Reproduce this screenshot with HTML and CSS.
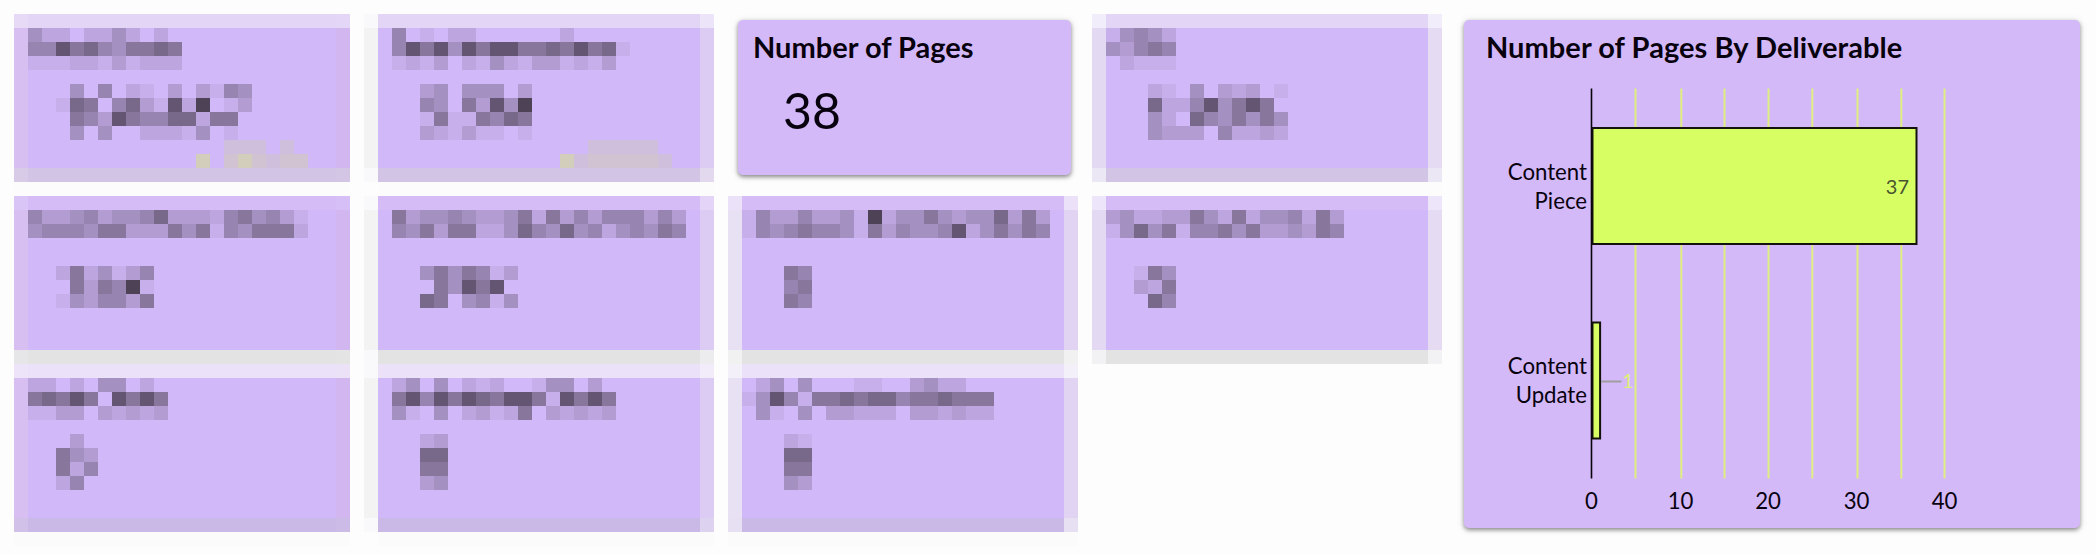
FILE: index.html
```html
<!DOCTYPE html>
<html lang="en">
<head>
<meta charset="utf-8">
<title>Pages dashboard</title>
<link rel="stylesheet" href="styles.css">
</head>
<body>
<main class="dashboard">
  <section class="metrics">
    <div class="tile" data-tile="a1"></div>
    <div class="tile" data-tile="b1"></div>
    <article class="card metric">
      <h2 class="card-title">Number of Pages</h2>
      <p class="metric-value">38</p>
    </article>
    <div class="tile" data-tile="d1"></div>
    <div class="tile" data-tile="a2"></div>
    <div class="tile" data-tile="b2"></div>
    <div class="tile" data-tile="c2"></div>
    <div class="tile" data-tile="d2"></div>
    <div class="tile" data-tile="a3"></div>
    <div class="tile" data-tile="b3"></div>
    <div class="tile" data-tile="c3"></div>
  </section>
  <article class="card chart-card">
    <h2 class="card-title">Number of Pages By Deliverable</h2>
    <svg class="chart" width="616" height="450" viewBox="1464 78 616 450">
      <g class="grid-lines">
        <path d="M1635.5 88.5V478.5M1681.3 88.5V478.5M1724.5 88.5V478.5M1768.5 88.5V478.5M1812.3 88.5V478.5M1857.5 88.5V478.5M1901.3 88.5V478.5M1944.5 88.5V478.5"/>
      </g>
      <rect class="bar" x="1592.5" y="128" width="324" height="116"/>
      <rect class="bar" x="1592.5" y="322.5" width="7.6" height="116"/>
      <path class="axis" d="M1591.5 88.5V478.5"/>
      <path class="leader" d="M1601 381.5H1621.5"/>
      <g class="category">
        <text x="1587" y="179.5">Content</text>
        <text x="1587" y="208.5">Piece</text>
        <text x="1587" y="373.5">Content</text>
        <text x="1587" y="402.5">Update</text>
      </g>
      <text class="value-in" x="1909" y="193.5">37</text>
      <text class="value-out" x="1622" y="388">1</text>
      <g class="ticks">
        <text x="1591.5" y="508.5">0</text>
        <text x="1680.5" y="508.5">10</text>
        <text x="1768" y="508.5">20</text>
        <text x="1856.5" y="508.5">30</text>
        <text x="1944.5" y="508.5">40</text>
      </g>
    </svg>
  </article>
</main>
<script src="tiles.js"></script>
</body>
</html>
```
FILE: styles.css
```css
* { box-sizing: border-box; }
body {
  margin: 0;
  background: #fdfdfd;
  font-family: Lato, "Open Sans", sans-serif;
  color: #08020e;
}
.dashboard {
  display: flex;
  gap: 22px;
  width: 2096px;
  height: 554px;
  padding: 14px;
  overflow: hidden;
}
.metrics {
  display: grid;
  flex: none;
  grid-template-columns: 336px 350px 350px 350px;
  grid-template-rows: 182px 168px 168px;
  column-gap: 14px;
  width: 1428px;
}
.tile svg { display: block; }
.card {
  background: #d4b9f9;
  border-radius: 5px;
  box-shadow: 0 2px 4px rgba(0, 0, 0, .42), 0 1px 8px rgba(0, 0, 0, .1);
}
.card-title {
  margin: 0;
  font-size: 29px;
  line-height: 36px;
  font-weight: 700;
  white-space: nowrap;
}
.metric {
  width: 333px;
  height: 155px;
  margin: 6px 7px 0 10px;
  padding: 9px 15px;
}
.metric-value {
  margin: 15px 0 0 30px;
  font-size: 50px;
  line-height: 60px;
}
.chart-card {
  flex: none;
  width: 616px;
  height: 508px;
  margin-top: 6px;
}
.chart-card .card-title {
  padding: 9px 0 0 22px;
  height: 58px;
  letter-spacing: .05px;
}
.chart { display: block; }
.grid-lines path { stroke: #deee80; stroke-width: 2; fill: none; }
.bar { fill: #d7ff64; stroke: #14120f; stroke-width: 2; }
.axis { stroke: #08040c; stroke-width: 1.6; }
.leader { stroke: #9e9e9e; stroke-width: 2; }
.chart text { font-size: 22.2px; fill: #08020e; }
.category text { text-anchor: end; }
.ticks text { text-anchor: middle; }
.chart .value-in { text-anchor: end; font-size: 20px; fill: #4b5430; }
.chart .value-out { font-size: 20px; fill: #dff07a; }
```
FILE: tiles.js
```js
// Obscured metric tiles: each is a mosaic of 14px cells.
// Digits darken the tile colour, x/y/z are accent tints, dots stay plain.
const CELL = 14;
const LIGHT = [209, 184, 248];
const DARK = [78, 66, 86];
const TINTS = { x: '#d2c3d2', y: '#d3cdbb', z: '#d0bfdc' };
const LEVELS = [0, 0.08, 0.15, 0.24, 0.34, 0.44, 0.56, 0.68, 0.83, 1];

const bands = {
  1: { top: '#e3d5f6', bottom: '#d2c4e4', below: '#fbfcfb' },
  2: { top: '#d5bcf6', bottom: '#e3e3e4', below: null },
  3: { top: '#ebe1f8', bottom: '#cab8e6', below: '#fbfbfb' }
};
const edges = {
  a: { cols: 24, first: 0, left: '#d7c0f1', right: '#d2b6f0', veil: 0.15 },
  b: { cols: 25, first: 1, left: '#f3f3f3', right: '#dccbf3', veil: 0.4 },
  c: { cols: 25, first: 0, left: '#e8e0f3', right: '#e0d4f2', veil: 0.6 },
  d: { cols: 25, first: 0, left: '#e4d9f3', right: '#e5dcf4', veil: 0.65 }
};
const mosaics = {
  a1: ['422.2242.2', '55867546676', '11122131222', '', '...4.5.21.3.3154', '..176.5731829.13', '...653865577266', '...4.4..22214.1', '..............zzz.z', '............y.xyxzxx'],
  b1: ['5.1.22......2', '58684868866768671', '1213.21421331213', '', '..34.444.3', '..54.63849', '..16116576', '..321311.1', '..............zzzzz', '............yzxxxxxz'],
  d1: ['14542', '43565', '.2111', '', '...21.4.323.1', '...722584686', '...42.7546464', '...4333.52232'],
  a2: ['53345344573332564531', '45554663336461546662', '', '', '..2624135', '...636591', '..1435536'],
  b2: ['634454334626353555353', '546366224754745245465', '', '', '..4646513', '...64868', '..76.4514'],
  c2: ['1533533419244643447363', '1545655416354458246465', '', '', '...65', '...56', '...65'],
  d2: ['34223364262445263', '14746155646334365', '', '', '..164', '..326', '...75'],
  a3: ['22.2.44.2', '67686.8686', '1133.32323', '', '...3', '..643', '..625', '..25'],
  b3: ['24.4.212..144.3', '6858687688618686', '41.4.23126.32323', '', '..23', '..77', '..66', '..34'],
  c3: ['.24.4...11..3422', '148516676775667666', '.41.4.33222.332322', '', '...21', '...77', '...66', '...43']
};

function shade(mark) {
  if (TINTS[mark]) return TINTS[mark];
  const t = LEVELS[Number(mark)];
  return 'rgb(' + LIGHT.map((v, i) => Math.round(v + (DARK[i] - v) * t)).join(',') + ')';
}

function rect(col, row, w, h, fill, opacity) {
  return `<rect x="${col * CELL}" y="${row * CELL}" width="${w * CELL}" height="${h * CELL}" fill="${fill}"` +
    (opacity ? ` fill-opacity="${opacity}"` : '') + '/>';
}

document.querySelectorAll('.tile').forEach(tile => {
  const key = tile.dataset.tile;
  const edge = edges[key[0]];
  const band = bands[key[1]];
  const { cols, first } = edge;
  const last = cols - 1;
  let out = '';
  if (band.below) out += rect(first, 12, cols - first, 1, band.below);
  out += rect(first, 0, cols - first, 12, shade(0));
  out += rect(0, 0, 1, 12, edge.left) + rect(last, 0, 1, 12, edge.right);
  out += rect(first, 0, cols - first, 1, band.top) + rect(first, 11, cols - first, 1, band.bottom);
  [0, 11].forEach(row => {
    out += rect(0, row, 1, 1, '#fafafc', first ? 0.8 : edge.veil);
    out += rect(last, row, 1, 1, '#fafafc', key[0] === 'a' ? 0.04 : edge.veil);
  });
  mosaics[key].forEach((line, r) => {
    [...line].forEach((mark, c) => {
      if (mark !== '.') out += rect(c + 1 + first, r + 1, 1, 1, shade(mark));
    });
  });
  const rows = key[1] === '1' || key[1] === '3' ? 13 : 12;
  tile.innerHTML = `<svg width="${cols * CELL}" height="${rows * CELL}" shape-rendering="crispEdges">${out}</svg>`;
});
```
